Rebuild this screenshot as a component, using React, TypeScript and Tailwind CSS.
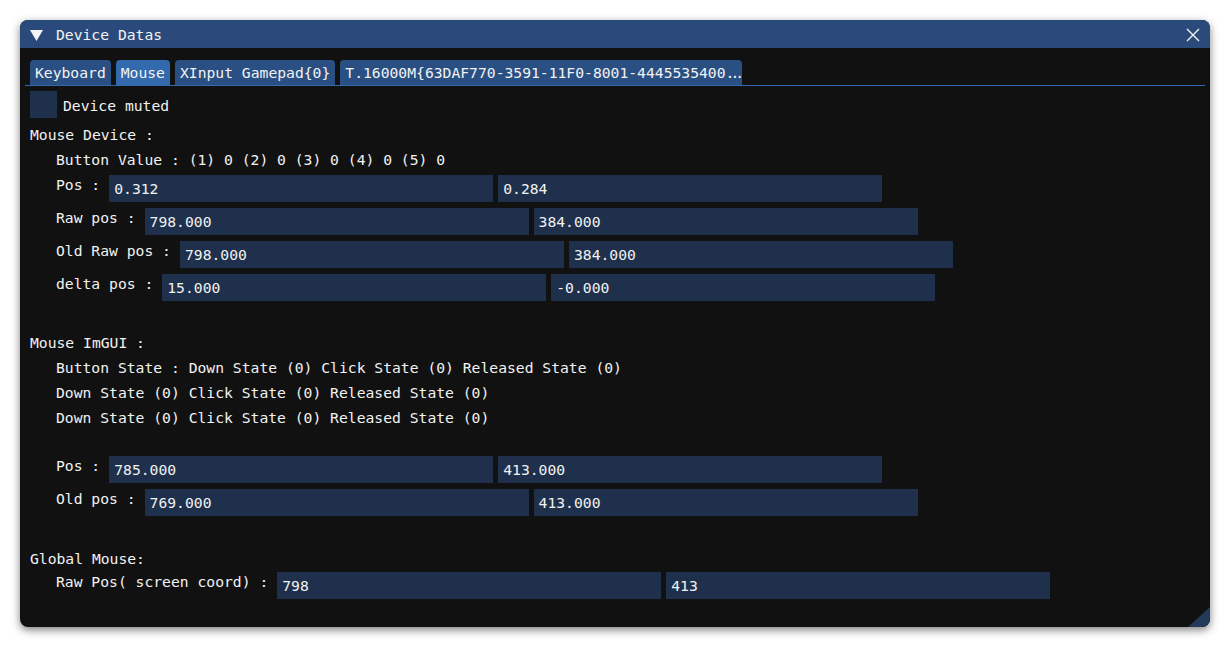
import type { ReactNode } from 'react';

const TABS = [
  { label: 'Keyboard', active: false },
  { label: 'Mouse', active: true },
  { label: 'XInput Gamepad{0}', active: false },
];

function Field({ value }: { value: string }) {
  return (
    <div className="w-[384px] h-[27px] bg-[#1e304b] pl-[5px] pt-[1px] flex items-center shrink-0">
      {value}
    </div>
  );
}

function FieldRow({ label, a, b, className = '' }: { label: string; a: string; b: string; className?: string }) {
  return (
    <div className={`flex h-[27px] pl-[26px] ${className}`}>
      <span className="leading-[20px] whitespace-pre">{label}</span>
      <div className="flex gap-[5px] ml-[9px]">
        <Field value={a} />
        <Field value={b} />
      </div>
    </div>
  );
}

function Line({ children, indent = false, className = '' }: { children: ReactNode; indent?: boolean; className?: string }) {
  return (
    <div className={`h-[25px] pt-[2px] flex items-center whitespace-pre ${indent ? 'pl-[26px]' : ''} ${className}`}>
      {children}
    </div>
  );
}

export default function App() {
  return (
    <div className="w-[1230px] h-[647px] bg-white pt-[20px] pl-[20px] font-['DejaVu_Sans_Mono',monospace] text-[14.7px] text-[#f2f2f2]">
      <div className="relative w-[1190px] h-[607px] rounded-[8px] bg-[#111111] overflow-hidden shadow-[0_3px_9px_rgba(0,0,0,0.5)]">
        {/* barre de titre */}
        <div className="h-[28px] bg-[#294a7a] flex items-center pl-[10px] pr-[10px] pt-[2px]">
          <svg width="13" height="11" viewBox="0 0 13 11" className="shrink-0">
            <polygon points="0,0 13,0 6.5,11" fill="#f4f4f4" />
          </svg>
          <span className="ml-[13px]">Device Datas</span>
          <svg width="14" height="14" viewBox="0 0 14 14" className="ml-auto">
            <path d="M1 1 L13 13 M13 1 L1 13" stroke="#f4f4f4" strokeWidth="1.4" />
          </svg>
        </div>

        <div className="px-[10px]">
          {/* onglets */}
          <div className="flex gap-[5px] mt-[12px] h-[25px]">
            {TABS.map((t) => (
              <div
                key={t.label}
                className={`h-[25px] px-[5px] pt-[1px] rounded-t-[4px] flex items-center ${t.active ? 'bg-[#3369ad]' : 'bg-[#2a4f82]'}`}
              >
                {t.label}
              </div>
            ))}
            <div className="h-[25px] pl-[5px] pt-[1px] rounded-t-[4px] flex items-center bg-[#2a4f82]">
              T.16000M{'{'}63DAF770-3591-11F0-8001-4445535400
              <span className="tracking-[-4px]">...</span>
              <span className="w-[2px]"></span>
            </div>
          </div>
          <div className="h-[1px] bg-[#3369ad] mx-[-5px]"></div>

          {/* case à cocher */}
          <div className="flex items-center mt-[5px] h-[27px]">
            <div className="w-[27px] h-[27px] bg-[#1e304b]"></div>
            <span className="ml-[6px] pt-[3px]">Device muted</span>
          </div>

          <Line className="mt-[4px]">Mouse Device :</Line>
          <Line indent>Button Value : (1) 0 (2) 0 (3) 0 (4) 0 (5) 0</Line>
          <FieldRow className="mt-[3px]" label="Pos :" a="0.312" b="0.284" />
          <FieldRow className="mt-[6px]" label="Raw pos :" a="798.000" b="384.000" />
          <FieldRow className="mt-[6px]" label="Old Raw pos :" a="798.000" b="384.000" />
          <FieldRow className="mt-[6px]" label="delta pos :" a="15.000" b="-0.000" />

          <Line className="mt-[29px]">Mouse ImGUI :</Line>
          <Line indent>Button State : Down State (0) Click State (0) Released State (0)</Line>
          <Line indent>Down State (0) Click State (0) Released State (0)</Line>
          <Line indent>Down State (0) Click State (0) Released State (0)</Line>
          <FieldRow className="mt-[26px]" label="Pos :" a="785.000" b="413.000" />
          <FieldRow className="mt-[6px]" label="Old pos :" a="769.000" b="413.000" />

          <Line className="mt-[30px]">Global Mouse:</Line>
          <FieldRow className="mt-[1px]" label="Raw Pos( screen coord) :" a="798" b="413" />
        </div>

        {/* poignée de redimensionnement */}
        <svg width="22" height="20" viewBox="0 0 22 20" className="absolute right-0 bottom-0">
          <polygon points="22,0 22,20 0,20" fill="#22395a" />
        </svg>
      </div>
    </div>
  );
}
